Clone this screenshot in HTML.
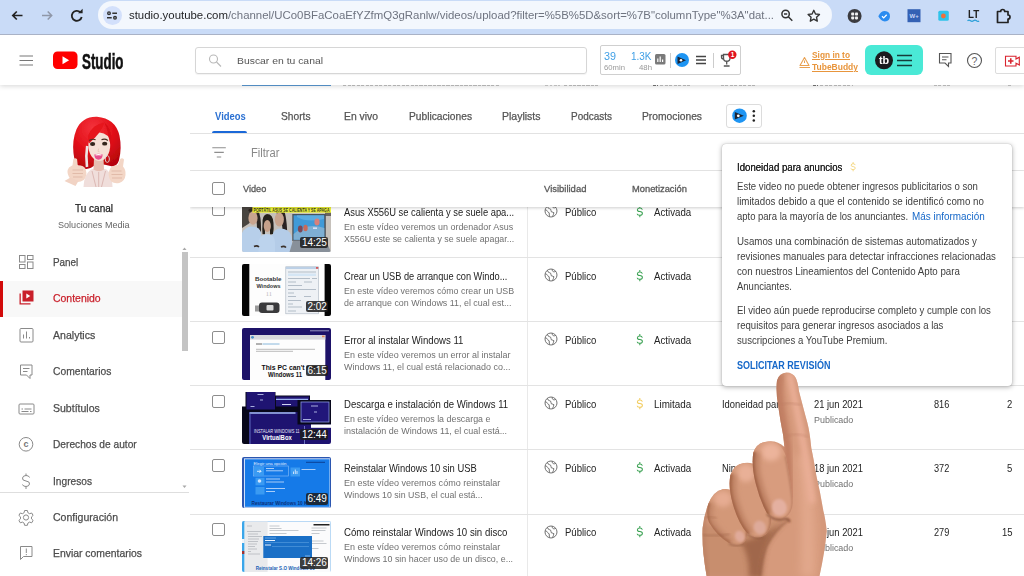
<!DOCTYPE html>
<html lang="es"><head><meta charset="utf-8"><title>Contenido del canal - YouTube Studio</title>
<style>
*{box-sizing:border-box;margin:0;padding:0}
html,body{width:1024px;height:576px;overflow:hidden;background:#fff}
body{position:relative;font-family:"Liberation Sans",sans-serif;color:#222;font-size:11px}
.t{position:absolute;white-space:nowrap;line-height:1}
.b{position:absolute}
svg{position:absolute;overflow:visible}
#chrome{position:absolute;left:0;top:0;width:1024px;height:35px;background:#c9dbf7;border-bottom:1px solid #a9b2c6;z-index:6}
#pill{position:absolute;left:98px;top:1px;width:734px;height:28px;border-radius:14px;background:#f3f7fd}
#tune{position:absolute;left:103px;top:6px;width:19px;height:19px;border-radius:50%;background:#d3e0fb}
#hdr{position:absolute;left:0;top:35px;width:1024px;height:50px;background:#fff;box-shadow:0 1px 5px rgba(0,0,0,.17);z-index:5}
#search{position:absolute;left:195px;top:12px;width:392px;height:27px;border:1px solid #d6d6d6;border-radius:3px;box-shadow:0 1px 1px rgba(0,0,0,.05)}
#stats{position:absolute;left:600px;top:10px;width:141px;height:30px;border:1px solid #cfcfcf;border-radius:2px}
#tbbtn{position:absolute;left:865px;top:10px;width:58px;height:30px;border-radius:6px;background:#4ae9d6}
#create{position:absolute;left:995px;top:12px;width:40px;height:27px;border:1px solid #dcdcdc;border-radius:2px}
.cb{position:absolute;left:212px;width:13px;height:13px;border:1px solid #8d8d8d;border-radius:2px;background:#fff}
.row{position:absolute;left:190px;width:834px;height:1px;background:#e3e3e3}
.th{position:absolute;left:242px;width:89px;height:51.500px;border-radius:2px;overflow:hidden}
.du{position:absolute;right:2.600px;bottom:3.500px;height:11.600px;background:rgba(28,28,28,.85);border-radius:2px;color:#fff;font-size:10px;line-height:11.600px;padding:0 1.500px;letter-spacing:0}
#pop{position:absolute;left:722px;top:144px;width:290px;height:241.500px;background:#fff;border-radius:4px;box-shadow:0 1px 5px rgba(0,0,0,.34),0 0 1px rgba(0,0,0,.3);z-index:3}
#thead{position:absolute;left:190px;top:170.500px;width:834px;height:36px;background:#fff;box-shadow:0 1px 3px rgba(0,0,0,.2);clip-path:inset(0 0 -8px 0);z-index:2}
</style></head><body>

<div id="chrome"><div id="pill"></div><div id="tune"></div>
<svg width="1024" height="35" viewBox="0 0 1024 35" style="left:0;top:0">
<path d="M22.500 15.500H13M16.800 11.500l-4 4 4 4" fill="none" stroke="#222" stroke-width="1.700"/>
<path d="M42 15.500H51.500M47.700 11.500l4 4-4 4" fill="none" stroke="#8f97a8" stroke-width="1.500"/>
<path d="M80.300 12.200A5 5 0 1 0 81.700 17" fill="none" stroke="#222" stroke-width="1.800"/><path d="M78 13.300h4.600V8.700z" fill="#222"/>
<g stroke="#333" stroke-width="1.400" fill="none"><circle cx="109" cy="13.200" r="1.300"/><path d="M112.300 13.200h4.700M107 17.800h4.700"/><circle cx="115" cy="17.800" r="1.300"/></g>
<g stroke="#333" stroke-width="1.500" fill="none"><circle cx="785.600" cy="14" r="3.700"/><path d="M788.300 16.800l4 4M784 14h3.200"/></g>
<path d="M813.800 10.300l1.700 3.700 4 .4-3 2.800.8 4-3.500-2-3.500 2 .8-4-3-2.800 4-.4z" fill="none" stroke="#333" stroke-width="1.350" stroke-linejoin="round"/>
<circle cx="854.600" cy="16" r="7" fill="#3b3b3f"/><g fill="#f0f0f0"><rect x="851.200" y="12.600" width="3" height="3" rx=".8"/><rect x="855" y="12.600" width="3" height="3" rx=".8"/><rect x="851.200" y="16.400" width="3" height="3" rx=".8"/><rect x="855" y="16.400" width="3" height="3" rx=".8"/></g>
<path d="M878.300 16.200q2.500-5.200 6.500-5.200 5.200.2 5.200 5.200t-5.200 5.200q-4-.2-6.500-5.200z" fill="#2b8cf0"/><path d="M882 16.200l1.700 1.700 3-3.200" stroke="#fff" stroke-width="1.300" fill="none"/>
<rect x="907.500" y="9.200" width="13" height="13" fill="#3461b4"/>
<rect x="938.300" y="10.800" width="10.500" height="10" rx="1.500" fill="#2fc4ea"/><circle cx="943.400" cy="16" r="2.400" fill="#f0703a"/>
<path d="M967.500 20.800q1.500-1.300 3 0t3 0 3 0 2.500 0" stroke="#2a9fd8" stroke-width="1.200" fill="none"/>
<path d="M997.500 11.500h3.200a2 2 0 0 1 4 0h3.300v3.500a2 2 0 0 1 0 4v3.500h-10.500z" fill="none" stroke="#222" stroke-width="1.700" stroke-linejoin="round"/>
</svg>
<span class="t" style="left:128.5px;top:9px;font-size:11.6px;color:#6f7480;transform:scaleX(0.9840);transform-origin:0 50%;"><span style="color:#1f2023">studio.youtube.com</span>/channel/UCo0BFaCoaEfYZfmQ3gRanlw/videos/upload?filter=%5B%5D&amp;sort=%7B"columnType"%3A"dat...</span>
<span class="t" style="left:909.5px;top:13px;font-size:6.0px;color:#c9d8f8;font-weight:bold;">W+</span>
<span class="t" style="left:967.8px;top:10px;font-size:10.0px;color:#222;transform:scaleX(0.9752);transform-origin:0 50%;font-weight:bold;">LT</span>
</div>
<div id="hdr">
<svg width="1024" height="50" viewBox="0 35 1024 50" style="left:0;top:0">
<path d="M19.500 56h13.500M19.500 60.500h13.500M19.500 65h13.500" stroke="#777" stroke-width="1"/>
<rect x="53" y="51.500" width="24.500" height="17.500" rx="4.500" fill="#f00"/><path d="M62.500 56.300v8l6.600-4z" fill="#fff"/>
<g stroke="#b8b8b8" stroke-width="1.100" fill="none"><circle cx="213.500" cy="59" r="4"/><path d="M216.500 62l4.500 4.500"/></g>
<rect x="655" y="54" width="10.500" height="10.500" rx="1.500" fill="#7a7a7a"/><path d="M657.800 62v-3.500M660.200 62v-5.500M662.600 62v-2.500" stroke="#fff" stroke-width="1.200"/>
<path d="M670.500 53v15M713.500 53v15" stroke="#ccc" stroke-width="1"/>
<circle cx="682" cy="60" r="7" fill="#1e95f3"/><path d="M677.500 56.500v7.500l8.500-3.700z" fill="#1c2433"/><circle cx="681" cy="60.200" r="1.300" fill="#fff"/>
<path d="M696 56.500h10M696 60h10M696 63.500h10" stroke="#444" stroke-width="1.500"/>
<g fill="none" stroke="#555" stroke-width="1.300"><path d="M723.500 54.500h6.500v3.500a3.250 3.250 0 0 1-6.500 0zM723.500 55.500h-2v1.500a2 2 0 0 0 2 2M730 55.500h1.500M726.700 61.500v3M723.800 66h5.800"/></g>
<circle cx="732.300" cy="54.800" r="4.200" fill="#e0131f"/>
<path d="M804.500 57.500l4.500 8h-9zM799.500 67.500h10.500" fill="none" stroke="#e9a050" stroke-width="1.100" stroke-linejoin="round"/><path d="M804.500 60.500v2.500" stroke="#e9a050" stroke-width="1"/>
<path d="M939.500 53.500h11.500v9.500h-2.500v3.500l-3.500-3.500h-5.500z" fill="none" stroke="#555" stroke-width="1.100"/><path d="M942 57h6.500M942 59.800h4.500" stroke="#555" stroke-width="1.100"/>
<circle cx="974.500" cy="60.500" r="7" fill="none" stroke="#555" stroke-width="1.100"/>
<path d="M1005.500 56.200h10.500v2.800l3.300-1.800v7.800l-3.300-1.800v2.800h-10.500z" fill="none" stroke="#d9232e" stroke-width="1.100"/><path d="M1008 61h5.500M1010.750 58.300v5.400" stroke="#d9232e" stroke-width="1.600"/>
</svg>
<span class="t" style="left:82.3px;top:16px;font-size:22.0px;color:#111;transform:scaleX(0.6064);transform-origin:0 50%;font-weight:bold;-webkit-text-stroke:.55px #111;">Studio</span>
<div id="search"></div>
<span class="t" style="left:237.0px;top:21px;font-size:9.6px;color:#555;transform:scaleX(1.0822);transform-origin:0 50%;">Buscar en tu canal</span>
<div id="stats"></div>
<span class="t" style="left:604.0px;top:16px;font-size:11.5px;color:#3f9fe6;transform:scaleX(0.9377);transform-origin:0 50%;">39</span>
<span class="t" style="left:604.0px;top:29px;font-size:7.6px;color:#999;transform:scaleX(1.0151);transform-origin:0 50%;">60min</span>
<span class="t" style="left:631.0px;top:16px;font-size:11.5px;color:#3f9fe6;transform:scaleX(0.8660);transform-origin:0 50%;">1.3K</span>
<span class="t" style="left:638.5px;top:29px;font-size:7.6px;color:#999;transform:scaleX(1.0259);transform-origin:0 50%;">48h</span>
<span class="t" style="left:730.8px;top:17px;font-size:6.5px;color:#fff;font-weight:bold;">1</span>
<span class="t" style="left:812.0px;top:15px;font-size:9.6px;color:#e8953c;transform:scaleX(0.8695);transform-origin:0 50%;font-weight:bold;text-decoration:underline;">Sign in to</span>
<span class="t" style="left:812.0px;top:27px;font-size:9.6px;color:#e8953c;transform:scaleX(0.8836);transform-origin:0 50%;font-weight:bold;text-decoration:underline;">TubeBuddy</span>
<div id="tbbtn"></div>
<svg width="60" height="30" viewBox="865 45 60 30" style="left:865px;top:10px"><circle cx="884" cy="60.300" r="9" fill="#1b1b1f"/><path d="M897 55.500h15M897 60.500h15M897 65.500h15" stroke="#163c3a" stroke-width="1.700"/></svg>
<span class="t" style="left:878.8px;top:20px;font-size:10.5px;color:#fff;transform:scaleX(1.0280);transform-origin:0 50%;font-weight:bold;">tb</span>
<span class="t" style="left:971.6px;top:21px;font-size:10.5px;color:#666;">?</span>
<div id="create"></div>
</div>
<div class="b" style="left:242px;top:84.500px;width:89px;height:1.500px;background:#5b9bd5;z-index:4"></div>
<div class="b" style="left:343px;top:85px;width:157px;height:1px;background:repeating-linear-gradient(90deg,#c4c4c4 0 3px,transparent 3px 4.500px);z-index:4"></div>
<div class="b" style="left:545px;top:85px;width:15px;height:1px;background:repeating-linear-gradient(90deg,#d0d0d0 0 3px,transparent 3px 4.500px);z-index:4"></div>
<div class="b" style="left:564px;top:85px;width:34px;height:1px;background:repeating-linear-gradient(90deg,#c4c4c4 0 3px,transparent 3px 4.500px);z-index:4"></div>
<div class="b" style="left:653px;top:85px;width:5px;height:1px;background:repeating-linear-gradient(90deg,#777 0 3px,transparent 3px 4.500px);z-index:4"></div>
<div class="b" style="left:660px;top:85px;width:30px;height:1px;background:repeating-linear-gradient(90deg,#c4c4c4 0 3px,transparent 3px 4.500px);z-index:4"></div>
<div class="b" style="left:721px;top:85px;width:36px;height:1px;background:repeating-linear-gradient(90deg,#c4c4c4 0 3px,transparent 3px 4.500px);z-index:4"></div>
<div class="b" style="left:813px;top:85px;width:5px;height:1px;background:repeating-linear-gradient(90deg,#777 0 3px,transparent 3px 4.500px);z-index:4"></div>
<div class="b" style="left:820px;top:85px;width:33px;height:1px;background:repeating-linear-gradient(90deg,#c4c4c4 0 3px,transparent 3px 4.500px);z-index:4"></div>
<div class="b" style="left:934px;top:85px;width:16px;height:1px;background:repeating-linear-gradient(90deg,#c8c8c8 0 3px,transparent 3px 4.500px);z-index:4"></div>
<div class="b" style="left:1008px;top:85px;width:3px;height:1px;background:repeating-linear-gradient(90deg,#c8c8c8 0 3px,transparent 3px 4.500px);z-index:4"></div>
<div class="b" style="left:0;top:280.500px;width:182px;height:36px;background:#f8f8f8"></div>
<div class="b" style="left:0;top:280.500px;width:3px;height:36px;background:#d20a0a"></div>
<div class="b" style="left:182px;top:252px;width:5.500px;height:98.500px;background:#c4c4c4"></div>
<div class="b" style="left:0;top:492px;width:189px;height:1px;background:#dedede"></div>
<span class="t" style="left:75.0px;top:203px;font-size:11.0px;color:#222;transform:scaleX(0.9092);transform-origin:0 50%;-webkit-text-stroke:.25px;">Tu canal</span>
<span class="t" style="left:58.0px;top:220px;font-size:9.6px;color:#666;transform:scaleX(0.9454);transform-origin:0 50%;">Soluciones Media</span>
<span class="t" style="left:53.0px;top:257px;font-size:11.0px;color:#4c4c4c;transform:scaleX(0.8991);transform-origin:0 50%;-webkit-text-stroke:.25px;">Panel</span>
<span class="t" style="left:53.0px;top:293px;font-size:11.0px;color:#c9202b;transform:scaleX(0.9510);transform-origin:0 50%;-webkit-text-stroke:.25px;">Contenido</span>
<span class="t" style="left:53.0px;top:330px;font-size:11.0px;color:#4c4c4c;transform:scaleX(0.9607);transform-origin:0 50%;-webkit-text-stroke:.25px;">Analytics</span>
<span class="t" style="left:53.0px;top:366px;font-size:11.0px;color:#4c4c4c;transform:scaleX(0.9349);transform-origin:0 50%;-webkit-text-stroke:.25px;">Comentarios</span>
<span class="t" style="left:53.0px;top:403px;font-size:11.0px;color:#4c4c4c;transform:scaleX(0.9566);transform-origin:0 50%;-webkit-text-stroke:.25px;">Subtítulos</span>
<span class="t" style="left:53.0px;top:439px;font-size:11.0px;color:#4c4c4c;transform:scaleX(0.9249);transform-origin:0 50%;-webkit-text-stroke:.25px;">Derechos de autor</span>
<span class="t" style="left:53.0px;top:476px;font-size:11.0px;color:#4c4c4c;transform:scaleX(0.9241);transform-origin:0 50%;-webkit-text-stroke:.25px;">Ingresos</span>
<span class="t" style="left:53.0px;top:512px;font-size:11.0px;color:#4c4c4c;transform:scaleX(0.9576);transform-origin:0 50%;-webkit-text-stroke:.25px;">Configuración</span>
<span class="t" style="left:53.0px;top:548px;font-size:11.0px;color:#4c4c4c;transform:scaleX(0.9452);transform-origin:0 50%;-webkit-text-stroke:.25px;">Enviar comentarios</span>
<svg width="190" height="576" viewBox="0 0 190 576" style="left:0;top:0">
<g fill="none" stroke="#8a8a8a" stroke-width="1">
<rect x="19.500" y="255.500" width="5.500" height="6.500"/><rect x="27.500" y="255.500" width="5.500" height="4"/><rect x="19.500" y="264.500" width="5.500" height="4"/><rect x="27.500" y="262" width="5.500" height="6.500"/>
<rect x="20" y="328.500" width="13" height="13.500" rx="1"/><path d="M23.500 338.500v-4M26.500 338.500v-7M29.500 338.500v-1.500"/>
<path d="M20.500 365h11.500v10h-2v3.500l-3.500-3.500h-6z"/><path d="M23 368.500h6.500M23 371.500h4.500"/>
<rect x="19" y="404" width="15" height="10" rx="1"/><path d="M21.500 409h1.500M24.500 409h7M21.500 411.500h7M30 411.500h1.500"/>
<circle cx="26" cy="444.300" r="6.800"/>
<path d="M29.500 477.500q-.5-2-3.500-2t-3.500 2.500 3.500 3 3.500 3-3.500 2.500-3.500-2M26 473.500v2M26 486.500v2.500"/>
<circle cx="26" cy="517.500" r="2.600"/><path d="M24.600 510.500h2.800l.5 2.200 1.700 1 2.100-.7 1.400 2.400-1.600 1.500v2l1.600 1.500-1.400 2.400-2.100-.7-1.700 1-.5 2.200h-2.800l-.5-2.200-1.700-1-2.100.7-1.400-2.400 1.600-1.500v-2l-1.600-1.500 1.400-2.400 2.100.7 1.700-1z"/>
<path d="M20.500 546.500h11.500v10h-8.500l-3 3z"/><path d="M26.300 548.500v4.500M26.300 554v1.200"/>
</g>
<g fill="#c9202b"><path d="M22.500 290.500h11v11h-11z"/><path d="M19.500 293.500h1.300v9.700h9.700v1.300h-11z"/></g><path d="M26.300 293.500v5l4-2.500z" fill="#fff"/>
<path d="M182.500 250l2-2.500 2 2.500z" fill="#a8a8a8"/><path d="M182.500 485.500l2 2.500 2-2.500z" fill="#a8a8a8"/>
</svg>
<span class="t" style="left:23.6px;top:440px;font-size:9.0px;color:#777;font-weight:bold;">c</span>
<svg width="80" height="80" viewBox="56 110 80 80" style="left:56px;top:110px">
<defs><filter id="ab" x="-20%" y="-20%" width="140%" height="140%"><feGaussianBlur stdDeviation=".6"/></filter>
<radialGradient id="hg" cx=".42" cy=".22" r=".8"><stop offset="0" stop-color="#f4333c"/><stop offset=".55" stop-color="#e20f18"/><stop offset="1" stop-color="#b5050d"/></radialGradient></defs>
<g filter="url(#ab)">
<!-- torso -->
<path d="M83.500 187q.5-13 7.500-17.500l7.500-2 8 2q6 4.500 6 17.500z" fill="#f0dedb"/>
<path d="M92 171l4 16M105.500 171l-4 16M98.700 172v15" stroke="#dcb8b4" stroke-width="1" fill="none"/>
<!-- hair -->
<path d="M97 116.800q-14.500-.5-20.500 12.500-4.500 11-3 24 1 11 6.500 14 6 3 11 .5l6-4 8 1 6.500 1.500q5.500.5 7.500-6 3-12 .5-24.500-4-17.500-22.500-19z" fill="url(#hg)"/>
<!-- neck -->
<path d="M94 158h9.500l.5 11.500q-5 3.500-10.500 0z" fill="#e6bfb2"/>
<!-- face -->
<path d="M88.400 144q.5-11 11-11.500 10 .5 10.800 11 .4 8-3.400 13-3.500 4.500-7.500 4.500t-7.600-4.500q-3.600-5-3.300-12.500z" fill="#f5e0d6"/>
<!-- white streak -->
<path d="M87.200 146q-1.600 10-.2 21" stroke="#ece6e6" stroke-width="2.600" fill="none"/>
<!-- fringe sweep -->
<path d="M104.500 122.500q-3 10-15.500 21-1.500-3-.8-8 4-11 16.300-13z" fill="#e6151d"/>
<path d="M104.500 122.500q3.500 8 6 22.500 1.200-3 .8-8-1-10-6.800-14.500z" fill="#d80d15"/>
<!-- eyes brows -->
<ellipse cx="92.600" cy="144" rx="2.600" ry="1.900" fill="#33251f"/><ellipse cx="104.700" cy="143.700" rx="2.600" ry="1.900" fill="#33251f"/>
<path d="M89.300 140.600q3.200-2.200 6.300-.8M101.500 139.800q3.200-1.400 6.400.6" stroke="#4a2e22" stroke-width="1.200" fill="none"/>
<path d="M98.600 148.500l-.6 3 1.600.3" stroke="#e2bfb0" stroke-width=".7" fill="none"/>
<!-- mouth -->
<path d="M94.300 154.600q4.200-1.800 8.400 0-.4 5.200-4.200 5.200t-4.200-5.200z" fill="#e9508c"/><path d="M95.500 155q3-.8 6 0" stroke="#fff" stroke-width="1.100" fill="none"/>
<!-- earring -->
<ellipse cx="107.300" cy="159" rx="2.100" ry="3.400" fill="none" stroke="#ddd8d8" stroke-width=".9"/>
<!-- left fist -->
<path d="M69 177q-3-5.500 0-9.500l3.500-2.200.8-6q2-2.200 3.800 0l.6 6q6.500 0 8 4.200 2 6.500-2 10.500-4.200 3-9.500 1.500-3.500-1-5.200-4.500z" fill="#f3d6c6"/>
<path d="M72.500 170h10.500M72.500 173.500h10.500M73 177h9.500" stroke="#dcb4a2" stroke-width=".8" fill="none"/>
<path d="M64.500 181l6-3.500 8 3.500-3 5z" fill="#f1d3c4"/>
<!-- right fist -->
<path d="M109.500 178.500q-2-6 1-10.500 3-3 7.500-3l2.200-6q2-1.600 3.800.5l-1 7q3 3 2.500 8.500-.5 6-6.200 8-5 1-8-1.500-1.300-1.300-1.800-3z" fill="#f3d6c6"/>
<path d="M111.500 171h10M111.500 174.500h11M112 178h10" stroke="#dcb4a2" stroke-width=".8" fill="none"/>
</g></svg>
<span class="t" style="left:215.2px;top:111px;font-size:10.6px;color:#2a70d2;transform:scaleX(0.8915);transform-origin:0 50%;font-weight:bold;">Videos</span>
<span class="t" style="left:280.9px;top:111px;font-size:10.6px;color:#555;transform:scaleX(0.9633);transform-origin:0 50%;-webkit-text-stroke:.25px;">Shorts</span>
<span class="t" style="left:344.0px;top:111px;font-size:10.6px;color:#555;transform:scaleX(0.9784);transform-origin:0 50%;-webkit-text-stroke:.25px;">En vivo</span>
<span class="t" style="left:409.0px;top:111px;font-size:10.6px;color:#555;transform:scaleX(0.9637);transform-origin:0 50%;-webkit-text-stroke:.25px;">Publicaciones</span>
<span class="t" style="left:502.0px;top:111px;font-size:10.6px;color:#555;transform:scaleX(0.9908);transform-origin:0 50%;-webkit-text-stroke:.25px;">Playlists</span>
<span class="t" style="left:570.5px;top:111px;font-size:10.6px;color:#555;transform:scaleX(0.9408);transform-origin:0 50%;-webkit-text-stroke:.25px;">Podcasts</span>
<span class="t" style="left:641.5px;top:111px;font-size:10.6px;color:#555;transform:scaleX(0.9704);transform-origin:0 50%;-webkit-text-stroke:.25px;">Promociones</span>
<div class="b" style="left:212px;top:131px;width:35px;height:2.300px;background:#1a68d8;border-radius:2px 2px 0 0"></div>
<div class="b" style="left:190px;top:133px;width:834px;height:1px;background:#e2e2e2"></div>
<div class="b" style="left:725.500px;top:104px;width:36px;height:23.500px;border:1px solid #dcdcdc;border-radius:3px"></div>
<svg width="40" height="24" viewBox="725 104 40 24" style="left:725px;top:104px"><circle cx="739.500" cy="115.700" r="7.300" fill="#1e95f3"/><path d="M734.800 112v7.600l9-3.800z" fill="#1c2433"/><circle cx="738.300" cy="115.800" r="1.400" fill="#fff"/><circle cx="753.800" cy="111.200" r="1.250" fill="#222"/><circle cx="753.800" cy="115.800" r="1.250" fill="#222"/><circle cx="753.800" cy="120.400" r="1.250" fill="#222"/></svg>
<svg width="20" height="14" viewBox="210 145 20 14" style="left:210px;top:145px"><path d="M212.300 147.700h13.500M214.300 152.400h9.500M216.800 157h4.400" stroke="#8e8e8e" stroke-width="1.100"/></svg>
<span class="t" style="left:251.3px;top:147px;font-size:12.0px;color:#888;transform:scaleX(0.9292);transform-origin:0 50%;">Filtrar</span>
<div class="b" style="left:190px;top:170px;width:834px;height:1.500px;background:#e6e6e6"></div>
<div class="b" style="left:527px;top:206px;width:1px;height:370px;background:#e9e9e9"></div>
<div class="row" style="top:257.1px"></div>
<div class="cb" style="top:202.9px"></div>
<div class="th" style="top:200.1px"><svg width="89" height="52" viewBox="0 0 89 52" style="left:0;top:0"><defs><filter id="tb" x="-20%" y="-20%" width="140%" height="140%"><feGaussianBlur stdDeviation=".7"/></filter></defs>
<rect width="89" height="52" fill="#c6c1bb"/>
<g filter="url(#tb)">
<path d="M0 0h11v20q-4 4-11 8z" fill="#4a443f"/>
<rect x="83" y="6" width="6" height="10" fill="#6a655f"/>
<!-- person 1 -->
<path d="M6 10q5-4 10 0 3.500 6 3 24l-4 1q.5-10-1-16z" fill="#2c2521"/>
<ellipse cx="11" cy="18" rx="4.600" ry="6.800" fill="#c9a58f"/>
<path d="M0 33q3-6 9-6.500l5 .5q5 2 5.500 8l.5 17H0z" fill="#b7cfea"/>
<!-- person 3 -->
<path d="M33 11q5-4 9-.5 3.500 8 3.500 36l-4.500 2q.5-22-2.500-30z" fill="#2a2320"/>
<ellipse cx="37.300" cy="19.500" rx="4.600" ry="7" fill="#c8a48e"/>
<path d="M30 35q2-6 8-6.500l4 .5q7 2 8 9v14H30z" fill="#b4cce8"/>
<!-- person 2 -->
<path d="M20.500 24q-.5-9 4.500-10 6 0 6.500 9 .5 6-.5 11l-3 .5v-8l-5-1v9l-2.500-.5q-.5-5 0-10z" fill="#28211e"/>
<ellipse cx="25.300" cy="26" rx="3.600" ry="6" fill="#c6a08a"/>
<path d="M16.500 42q1-7 7-8l4 .3q5 1 5.500 8v10H16.500z" fill="#bcd3ed"/>
<path d="M12 46.500q3-1.500 5 .5M39 47q3-1.500 5 .5" stroke="#3a302b" stroke-width="1.600" fill="none"/>
<!-- laptop -->
<rect x="50.300" y="14" width="33.500" height="27" fill="#4c535b"/>
<rect x="51.600" y="15.300" width="30.700" height="24.500" fill="#3f9ad8"/>
<path d="M51.600 34q14-12 30.700-6v11.800H51.600z" fill="#8fb4d2" opacity=".8"/>
<path d="M55 17q10 6 27 2v-3.700H55z" fill="#6ab4e6" opacity=".7"/>
<ellipse cx="58.300" cy="29" rx="2.400" ry="3.400" fill="#7a4a5a"/><ellipse cx="63.500" cy="28" rx="2.200" ry="3.200" fill="#c86a5a"/><ellipse cx="75" cy="22" rx="2.600" ry="3.400" fill="#d8807a"/>
<rect x="71" y="27.500" width="4" height="1.300" fill="#eef"/>
<path d="M47.500 52l3.500-11.500h33l5 11.500z" fill="#88909a"/>
</g>
<rect x="10.400" y="6.500" width="78.600" height="6.200" fill="#f0f43c"/>
<text x="11.500" y="12" font-family="Liberation Sans,sans-serif" font-weight="bold" font-size="6.200" fill="#35351c" textLength="76" lengthAdjust="spacingAndGlyphs">PORTÁTIL ASUS SE CALIENTA Y SE APAGA</text>
</svg><span class="du">14:25</span></div>
<span class="t" style="left:343.6px;top:207px;font-size:10.5px;color:#222;transform:scaleX(0.8912);transform-origin:0 50%;">Asus X556U se calienta y se suele apa...</span>
<span class="t" style="left:343.6px;top:223px;font-size:9.0px;color:#707070;transform:scaleX(0.9941);transform-origin:0 50%;">En este vídeo veremos un ordenador Asus</span>
<span class="t" style="left:343.6px;top:235px;font-size:9.0px;color:#707070;transform:scaleX(0.9826);transform-origin:0 50%;">X556U este se calienta y se suele apagar...</span>
<svg width="14" height="14" viewBox="-7 -7 14 14" style="left:544.100px;top:204.0px"><g fill="none" stroke="#6a6a6a" stroke-width=".95"><circle r="6"/><path d="M-3.600-4.800q.3 2.200 2 2.400t1.600 2 1.800 1.600.6 2.400-.4 2.200M-5.800-1.200q1.800.2 2.400 1.600t1.600 1.400l.2 3.800M1.200-5.800q-.4 1.800 1 2.400t2.800-.4"/></g></svg>
<span class="t" style="left:564.7px;top:208px;font-size:10.2px;color:#242424;transform:scaleX(0.9365);transform-origin:0 50%;">Público</span>
<svg width="7.800" height="11.300" viewBox="0 0 9 13.600" style="left:636.400px;top:205.5px"><path d="M7.400 4.500q-.4-2-3-2t-2.900 2 2.900 2.200 3.100 2.300-3.100 2.200-3.200-1.900M4.400 0v2.600M4.400 11v2.600" fill="none" stroke="#3aa152" stroke-width="1.250"/></svg>
<span class="t" style="left:653.6px;top:208px;font-size:10.2px;color:#242424;transform:scaleX(0.9519);transform-origin:0 50%;">Activada</span>
<div class="row" style="top:321.2px"></div>
<div class="cb" style="top:267.0px"></div>
<div class="th" style="top:264.2px"><svg width="89" height="52" viewBox="0 0 89 52" style="left:0;top:0">
<rect width="89" height="52" fill="#fdfdfd"/><rect width="7.300" height="52" fill="#050505"/><rect x="82.600" width="6.400" height="52" fill="#050505"/>
<text x="13" y="17" font-family="Liberation Sans,sans-serif" font-weight="bold" font-size="6.200" fill="#333" textLength="26.500" lengthAdjust="spacingAndGlyphs">Bootable</text>
<text x="14.500" y="24" font-family="Liberation Sans,sans-serif" font-weight="bold" font-size="6.200" fill="#333" textLength="24" lengthAdjust="spacingAndGlyphs">Windows</text>
<text x="23.700" y="32" font-family="Liberation Serif,serif" font-size="6.500" fill="#bbb">11</text>
<rect x="13" y="41.500" width="5" height="6" fill="#9a9a9a"/><rect x="17" y="38.500" width="20.500" height="10.500" rx="3" fill="#3a3a3c"/><rect x="24.500" y="41" width="7" height="5.500" rx="1" fill="#d8d8d8"/>
<rect x="43.800" y="2.800" width="32.700" height="47" fill="#eef1f5" stroke="#aab4c0" stroke-width=".6"/><rect x="43.800" y="2.800" width="32.700" height="2.200" fill="#bcd0e6"/><rect x="74" y="3" width="2.300" height="1.800" fill="#d65a5a"/>
<g stroke="#9aa6b4" stroke-width=".7"><path d="M46 8h28M46 11h10M46 14.500h22M70 14.500h5M46 18h8M62 18h8M46 21.500h14M46 25.500h28M46 29h6M46 32.500h8M62 32.500h7M46 36.500h13M46 40h5M46 43h14M46 47h8"/></g>
<rect x="46" y="9.500" width="28" height="2.500" fill="#d5e6f5"/>
</svg><span class="du">2:02</span></div>
<span class="t" style="left:343.6px;top:271px;font-size:10.5px;color:#222;transform:scaleX(0.8776);transform-origin:0 50%;">Crear un USB de arranque con Windo...</span>
<span class="t" style="left:343.6px;top:287px;font-size:9.0px;color:#707070;transform:scaleX(0.9827);transform-origin:0 50%;">En este vídeo veremos cómo crear un USB</span>
<span class="t" style="left:343.6px;top:299px;font-size:9.0px;color:#707070;transform:scaleX(0.9880);transform-origin:0 50%;">de arranque con Windows 11, el cual est...</span>
<svg width="14" height="14" viewBox="-7 -7 14 14" style="left:544.100px;top:268.1px"><g fill="none" stroke="#6a6a6a" stroke-width=".95"><circle r="6"/><path d="M-3.600-4.800q.3 2.200 2 2.400t1.600 2 1.800 1.600.6 2.400-.4 2.200M-5.800-1.200q1.800.2 2.400 1.600t1.600 1.400l.2 3.800M1.200-5.800q-.4 1.800 1 2.400t2.800-.4"/></g></svg>
<span class="t" style="left:564.7px;top:272px;font-size:10.2px;color:#242424;transform:scaleX(0.9365);transform-origin:0 50%;">Público</span>
<svg width="7.800" height="11.300" viewBox="0 0 9 13.600" style="left:636.400px;top:269.6px"><path d="M7.400 4.500q-.4-2-3-2t-2.900 2 2.900 2.200 3.100 2.300-3.100 2.200-3.200-1.900M4.400 0v2.600M4.400 11v2.600" fill="none" stroke="#3aa152" stroke-width="1.250"/></svg>
<span class="t" style="left:653.6px;top:272px;font-size:10.2px;color:#242424;transform:scaleX(0.9519);transform-origin:0 50%;">Activada</span>
<div class="row" style="top:385.3px"></div>
<div class="cb" style="top:331.1px"></div>
<div class="th" style="top:328.3px"><svg width="89" height="52" viewBox="0 0 89 52" style="left:0;top:0">
<rect width="89" height="52" fill="#1d1268"/>
<rect x="8" y="7" width="75.300" height="45" fill="#fdfdfd"/><rect x="8" y="7" width="75.300" height="4.600" fill="#d8d8dc"/>
<circle cx="10.500" cy="9.300" r="1.400" fill="#4a90c8"/><rect x="80" y="7.600" width="2.600" height="1.600" fill="#e08a5a"/>
<path d="M68 2.800h19" stroke="#b8b8d8" stroke-width=".8"/>
<path d="M14 16h6" stroke="#555" stroke-width=".9"/><path d="M20.500 16h17" stroke="#7ab0d8" stroke-width=".9"/>
<path d="M14 21.300h59M14 23.300h37" stroke="#aaa" stroke-width=".8"/>
<text x="19.500" y="42" font-family="Liberation Sans,sans-serif" font-weight="bold" font-size="6.300" fill="#111" textLength="56" lengthAdjust="spacingAndGlyphs">This PC can't run</text>
<text x="26" y="48.800" font-family="Liberation Sans,sans-serif" font-weight="bold" font-size="6.300" fill="#111" textLength="34" lengthAdjust="spacingAndGlyphs">Windows 11</text>
</svg><span class="du">6:15</span></div>
<span class="t" style="left:343.6px;top:335px;font-size:10.5px;color:#222;transform:scaleX(0.9147);transform-origin:0 50%;">Error al instalar Windows 11</span>
<span class="t" style="left:343.6px;top:351px;font-size:9.0px;color:#707070;transform:scaleX(0.9958);transform-origin:0 50%;">En este vídeo veremos un error al instalar</span>
<span class="t" style="left:343.6px;top:363px;font-size:9.0px;color:#707070;transform:scaleX(0.9938);transform-origin:0 50%;">Windows 11, el cual está relacionado co...</span>
<svg width="14" height="14" viewBox="-7 -7 14 14" style="left:544.100px;top:332.2px"><g fill="none" stroke="#6a6a6a" stroke-width=".95"><circle r="6"/><path d="M-3.600-4.800q.3 2.200 2 2.400t1.600 2 1.800 1.600.6 2.400-.4 2.200M-5.800-1.200q1.800.2 2.400 1.600t1.600 1.400l.2 3.800M1.200-5.800q-.4 1.800 1 2.400t2.800-.4"/></g></svg>
<span class="t" style="left:564.7px;top:336px;font-size:10.2px;color:#242424;transform:scaleX(0.9365);transform-origin:0 50%;">Público</span>
<svg width="7.800" height="11.300" viewBox="0 0 9 13.600" style="left:636.400px;top:333.7px"><path d="M7.400 4.500q-.4-2-3-2t-2.900 2 2.900 2.200 3.100 2.300-3.100 2.200-3.200-1.900M4.400 0v2.600M4.400 11v2.600" fill="none" stroke="#3aa152" stroke-width="1.250"/></svg>
<span class="t" style="left:653.6px;top:336px;font-size:10.2px;color:#242424;transform:scaleX(0.9519);transform-origin:0 50%;">Activada</span>
<div class="row" style="top:449.4px"></div>
<div class="cb" style="top:395.2px"></div>
<div class="th" style="top:392.4px"><svg width="89" height="53" viewBox="0 0 89 53" style="left:0;top:0">
<rect width="89" height="53" fill="#fff"/>
<rect x="33" y="3.500" width="35" height="17" fill="#0a0a1a"/><rect x="34" y="4.500" width="33" height="15" fill="#1f1472"/><path d="M34 7.300h32" stroke="#9db4ee" stroke-width="1.200"/><path d="M40 12.500h9" stroke="#cfd4f0" stroke-width="1.200"/>
<rect x="0" y="14.500" width="69" height="38.500" fill="#07071a"/>
<rect x="7" y="20" width="82" height="33" fill="#1e1370"/><path d="M7.500 21h46" stroke="#a4bdf2" stroke-width="1.500"/><path d="M8 21v32" stroke="#6d7fd0" stroke-width=".8"/>
<rect x="3.500" y="0" width="30" height="18.500" fill="#07071a"/><rect x="4.500" y="0" width="28.500" height="17.500" fill="#1f1472"/><path d="M15.500 2.500h6M18 8h3M8.500 14.500h4" stroke="#b8c0ea" stroke-width=".9"/>
<rect x="55.500" y="8" width="33.500" height="24.500" fill="#07071a"/><rect x="59" y="10" width="28" height="20" fill="#21167a" stroke="#8a98e0" stroke-width=".8"/><path d="M69 14h7M72 20h3M61 27.500h8" stroke="#b8c0ea" stroke-width=".9"/>
<rect x="69" y="32.500" width="20" height="3.300" fill="#fff"/><path d="M62.500 34v19" stroke="#8a98e0" stroke-width=".7"/>
<text x="12" y="41" font-family="Liberation Sans,sans-serif" font-size="5" fill="#e8e8f8" textLength="45.500" lengthAdjust="spacingAndGlyphs">INSTALAR WINDOWS 11</text>
<text x="20.300" y="48.300" font-family="Liberation Sans,sans-serif" font-weight="bold" font-size="6.500" fill="#fff" textLength="29.500" lengthAdjust="spacingAndGlyphs">VirtualBox</text>
</svg><span class="du">12:44</span></div>
<span class="t" style="left:343.6px;top:399px;font-size:10.5px;color:#222;transform:scaleX(0.9109);transform-origin:0 50%;">Descarga e instalación de Windows 11</span>
<span class="t" style="left:343.6px;top:415px;font-size:9.0px;color:#707070;transform:scaleX(0.9852);transform-origin:0 50%;">En este vídeo veremos la descarga e</span>
<span class="t" style="left:343.6px;top:427px;font-size:9.0px;color:#707070;transform:scaleX(0.9950);transform-origin:0 50%;">instalación de Windows 11, el cual está...</span>
<svg width="14" height="14" viewBox="-7 -7 14 14" style="left:544.100px;top:396.3px"><g fill="none" stroke="#6a6a6a" stroke-width=".95"><circle r="6"/><path d="M-3.600-4.800q.3 2.200 2 2.400t1.600 2 1.800 1.600.6 2.400-.4 2.200M-5.800-1.200q1.800.2 2.400 1.600t1.600 1.400l.2 3.800M1.200-5.800q-.4 1.800 1 2.400t2.800-.4"/></g></svg>
<span class="t" style="left:564.7px;top:400px;font-size:10.2px;color:#242424;transform:scaleX(0.9365);transform-origin:0 50%;">Público</span>
<svg width="7.800" height="11.300" viewBox="0 0 9 13.600" style="left:636.400px;top:397.8px"><path d="M7.400 4.500q-.4-2-3-2t-2.900 2 2.900 2.200 3.100 2.300-3.100 2.200-3.200-1.900M4.400 0v2.600M4.400 11v2.600" fill="none" stroke="#f2cc5e" stroke-width="1.250"/></svg>
<span class="t" style="left:653.6px;top:400px;font-size:10.2px;color:#242424;transform:scaleX(0.9658);transform-origin:0 50%;">Limitada</span>
<span class="t" style="left:721.9px;top:400px;font-size:10.2px;color:#242424;transform:scaleX(0.9219);transform-origin:0 50%;">Idoneidad para ...</span>
<span class="t" style="left:814.0px;top:400px;font-size:10.2px;color:#242424;transform:scaleX(0.9199);transform-origin:0 50%;">21 jun 2021</span>
<span class="t" style="left:814.0px;top:416px;font-size:9.0px;color:#707070;transform:scaleX(0.9942);transform-origin:0 50%;">Publicado</span>
<span class="t" style="left:934.0px;top:400px;font-size:10.2px;color:#242424;transform:scaleX(0.9000);transform-origin:0 50%;">816</span>
<span class="t" style="left:1006.9px;top:400px;font-size:10.2px;color:#242424;transform:scaleX(0.9302);transform-origin:0 50%;">2</span>
<div class="row" style="top:513.5px"></div>
<div class="cb" style="top:459.3px"></div>
<div class="th" style="top:456.5px"><svg width="89" height="52" viewBox="0 0 89 52" style="left:0;top:0">
<rect width="89" height="52" fill="#2b56b0"/><rect x="2" y="1.300" width="86" height="49.500" fill="#cfe0fb"/><rect x="3" y="2.300" width="84.500" height="47.500" fill="#157ae8"/>
<text x="11.500" y="7.500" font-family="Liberation Sans,sans-serif" font-size="4.200" fill="#e4efff" textLength="33" lengthAdjust="spacingAndGlyphs">Elegir una opción</text>
<path d="M64 5.300h19" stroke="#0a3a8a" stroke-width=".9"/>
<rect x="11.500" y="9" width="35" height="10" fill="none" stroke="#8cc0f8" stroke-width=".6"/>
<rect x="12" y="9.500" width="10" height="9.500" fill="#3a9af2"/><path d="M15 14.300h4l-1.500-1.500M19 14.300l-1.500 1.500" stroke="#fff" stroke-width=".8" fill="none"/>
<rect x="48.500" y="10.500" width="9.500" height="9" fill="#3a9af2"/><path d="M51.500 17v-2.500M53.300 17v-4.500M55 17v-3" stroke="#e8f2ff" stroke-width=".8"/>
<rect x="13.500" y="20.800" width="9" height="7.500" fill="#3a9af2"/><circle cx="17.500" cy="24" r="1.800" fill="#cfe4ff"/>
<rect x="13.500" y="30" width="9" height="7.500" fill="#3a9af2"/>
<path d="M24 11.500h8M24 13.800h17M59.500 12.500h14M24 22h14M24 25h18M24 31.500h19M24 34.500h9" stroke="#cfe2fb" stroke-width=".8"/>
<text x="9.500" y="47.500" font-family="Liberation Sans,sans-serif" font-weight="bold" font-size="5.500" fill="#0c2f78" textLength="56" lengthAdjust="spacingAndGlyphs">Restaurar Windows 10 K</text>
</svg><span class="du">6:49</span></div>
<span class="t" style="left:343.6px;top:463px;font-size:10.5px;color:#222;transform:scaleX(0.8959);transform-origin:0 50%;">Reinstalar Windows 10 sin USB</span>
<span class="t" style="left:343.6px;top:479px;font-size:9.0px;color:#707070;transform:scaleX(1.0008);transform-origin:0 50%;">En este vídeo veremos cómo reinstalar</span>
<span class="t" style="left:343.6px;top:491px;font-size:9.0px;color:#707070;transform:scaleX(0.9763);transform-origin:0 50%;">Windows 10 sin USB, el cual está...</span>
<svg width="14" height="14" viewBox="-7 -7 14 14" style="left:544.100px;top:460.4px"><g fill="none" stroke="#6a6a6a" stroke-width=".95"><circle r="6"/><path d="M-3.600-4.800q.3 2.200 2 2.400t1.600 2 1.800 1.600.6 2.400-.4 2.200M-5.800-1.200q1.800.2 2.400 1.600t1.600 1.400l.2 3.800M1.200-5.800q-.4 1.800 1 2.400t2.800-.4"/></g></svg>
<span class="t" style="left:564.7px;top:464px;font-size:10.2px;color:#242424;transform:scaleX(0.9365);transform-origin:0 50%;">Público</span>
<svg width="7.800" height="11.300" viewBox="0 0 9 13.600" style="left:636.400px;top:461.9px"><path d="M7.400 4.500q-.4-2-3-2t-2.900 2 2.900 2.200 3.100 2.300-3.100 2.200-3.200-1.900M4.400 0v2.600M4.400 11v2.600" fill="none" stroke="#3aa152" stroke-width="1.250"/></svg>
<span class="t" style="left:653.6px;top:464px;font-size:10.2px;color:#242424;transform:scaleX(0.9519);transform-origin:0 50%;">Activada</span>
<span class="t" style="left:721.9px;top:464px;font-size:10.2px;color:#242424;transform:scaleX(0.9215);transform-origin:0 50%;">Ninguna</span>
<span class="t" style="left:814.0px;top:464px;font-size:10.2px;color:#242424;transform:scaleX(0.9199);transform-origin:0 50%;">18 jun 2021</span>
<span class="t" style="left:814.0px;top:480px;font-size:9.0px;color:#707070;transform:scaleX(0.9942);transform-origin:0 50%;">Publicado</span>
<span class="t" style="left:934.0px;top:464px;font-size:10.2px;color:#242424;transform:scaleX(0.9000);transform-origin:0 50%;">372</span>
<span class="t" style="left:1006.9px;top:464px;font-size:10.2px;color:#242424;transform:scaleX(0.9302);transform-origin:0 50%;">5</span>
<div class="row" style="top:577.6px"></div>
<div class="cb" style="top:523.4px"></div>
<div class="th" style="top:520.6px"><svg width="89" height="52" viewBox="0 0 89 52" style="left:0;top:0">
<rect width="89" height="52" fill="#fbfbfc"/><rect width="89" height="52" fill="none" stroke="#7ab8ee" stroke-width="1"/><rect width="2.600" height="52" fill="#3aa6ea"/><rect x="0" y="18" width="2.600" height="4" fill="#f0f4f8"/><rect x="0" y="30" width="2.600" height="3" fill="#a03030"/>
<rect x="2.600" y=".5" width="23" height="51" fill="#e9eaec"/>
<g stroke="#b4b8be" stroke-width=".8"><path d="M5 5h5M5 10.500h14M6 13h10M6 15.500h14M6 18h11M6 20.500h10M6 23h9M6 25.500h7M6 28h9M6 30.500h3M6 33h12"/></g>
<g stroke="#b8bcc2" stroke-width=".8"><path d="M27.500 5h10M27.500 7.500h12M27.500 9.500h29M27.500 12.500h17"/><path d="M69.500 7h15M69.500 9.500h14M69.500 12.500h8M69.500 20h12M69.500 22.500h15M69.500 27.500h7"/></g>
<path d="M71.500 3.700h16" stroke="#222" stroke-width="1.500"/>
<rect x="21.300" y="15" width="48.700" height="22" fill="#1a6fc6"/><path d="M23 17h11" stroke="#7ab4ee" stroke-width=".8"/><path d="M23 19.500h10M23 24h6" stroke="#e8f2ff" stroke-width="1"/><path d="M23 21.500h44M30 25.500h37" stroke="#5a9fe0" stroke-width=".6"/><path d="M63 35h5" stroke="#9ac6f4" stroke-width=".8"/>
<text x="13.700" y="48.500" font-family="Liberation Sans,sans-serif" font-weight="bold" font-size="5.600" fill="#1a5fb4" textLength="59" lengthAdjust="spacingAndGlyphs">Reinstalar S.O Windows 10</text>
</svg><span class="du">14:26</span></div>
<span class="t" style="left:343.6px;top:527px;font-size:10.5px;color:#222;transform:scaleX(0.9180);transform-origin:0 50%;">Cómo reinstalar Windows 10 sin disco</span>
<span class="t" style="left:343.6px;top:543px;font-size:9.0px;color:#707070;transform:scaleX(1.0008);transform-origin:0 50%;">En este vídeo veremos cómo reinstalar</span>
<span class="t" style="left:343.6px;top:555px;font-size:9.0px;color:#707070;transform:scaleX(0.9883);transform-origin:0 50%;">Windows 10 sin hacer uso de un disco, e...</span>
<svg width="14" height="14" viewBox="-7 -7 14 14" style="left:544.100px;top:524.5px"><g fill="none" stroke="#6a6a6a" stroke-width=".95"><circle r="6"/><path d="M-3.600-4.800q.3 2.200 2 2.400t1.600 2 1.800 1.600.6 2.400-.4 2.200M-5.800-1.200q1.800.2 2.400 1.600t1.600 1.400l.2 3.800M1.200-5.800q-.4 1.800 1 2.400t2.800-.4"/></g></svg>
<span class="t" style="left:564.7px;top:528px;font-size:10.2px;color:#242424;transform:scaleX(0.9365);transform-origin:0 50%;">Público</span>
<svg width="7.800" height="11.300" viewBox="0 0 9 13.600" style="left:636.400px;top:526.0px"><path d="M7.400 4.500q-.4-2-3-2t-2.900 2 2.900 2.200 3.100 2.300-3.100 2.200-3.200-1.900M4.400 0v2.600M4.400 11v2.600" fill="none" stroke="#3aa152" stroke-width="1.250"/></svg>
<span class="t" style="left:653.6px;top:528px;font-size:10.2px;color:#242424;transform:scaleX(0.9519);transform-origin:0 50%;">Activada</span>
<span class="t" style="left:721.9px;top:528px;font-size:10.2px;color:#242424;transform:scaleX(0.9215);transform-origin:0 50%;">Ninguna</span>
<span class="t" style="left:814.0px;top:528px;font-size:10.2px;color:#242424;transform:scaleX(0.9199);transform-origin:0 50%;">16 jun 2021</span>
<span class="t" style="left:814.0px;top:544px;font-size:9.0px;color:#707070;transform:scaleX(0.9942);transform-origin:0 50%;">Publicado</span>
<span class="t" style="left:934.0px;top:528px;font-size:10.2px;color:#242424;transform:scaleX(0.9000);transform-origin:0 50%;">279</span>
<span class="t" style="left:1001.6px;top:528px;font-size:10.2px;color:#242424;transform:scaleX(0.9302);transform-origin:0 50%;">15</span>
<div id="thead"></div>
<div class="cb" style="top:182px;z-index:2"></div>
<span class="t" style="left:242.5px;top:184px;font-size:9.6px;color:#5a5a5a;transform:scaleX(0.9559);transform-origin:0 50%;z-index:2;-webkit-text-stroke:.3px;">Video</span>
<span class="t" style="left:543.6px;top:184px;font-size:9.6px;color:#5a5a5a;transform:scaleX(0.9853);transform-origin:0 50%;z-index:2;-webkit-text-stroke:.3px;">Visibilidad</span>
<span class="t" style="left:632.0px;top:184px;font-size:9.6px;color:#5a5a5a;transform:scaleX(0.9729);transform-origin:0 50%;z-index:2;-webkit-text-stroke:.3px;">Monetización</span>
<div id="pop"></div>
<span class="t" style="left:736.6px;top:163px;font-size:10.4px;color:#222;transform:scaleX(0.9261);transform-origin:0 50%;z-index:4;text-shadow:0 0 .3px #222;">Idoneidad para anuncios</span>
<svg width="6.400" height="9.300" viewBox="0 0 9 13.600" style="left:850.300px;top:162.100px;z-index:4"><path d="M7.400 4.500q-.4-2-3-2t-2.900 2 2.900 2.200 3.100 2.300-3.100 2.200-3.200-1.900M4.400 0v2.600M4.400 11v2.600" fill="none" stroke="#f3d272" stroke-width="1.200"/></svg>
<span class="t" style="left:736.6px;top:182px;font-size:10.4px;color:#3e3e3e;transform:scaleX(0.9227);transform-origin:0 50%;z-index:4;">Este video no puede obtener ingresos publicitarios o son</span>
<span class="t" style="left:736.6px;top:197px;font-size:10.4px;color:#3e3e3e;transform:scaleX(0.9373);transform-origin:0 50%;z-index:4;">limitados debido a que el contenido se identificó como no</span>
<span class="t" style="left:736.6px;top:212px;font-size:10.4px;color:#3e3e3e;transform:scaleX(0.9119);transform-origin:0 50%;z-index:4;">apto para la mayoría de los anunciantes.</span>
<span class="t" style="left:911.8px;top:212px;font-size:10.4px;color:#1668c9;transform:scaleX(0.9536);transform-origin:0 50%;z-index:4;">Más información</span>
<span class="t" style="left:736.6px;top:237px;font-size:10.4px;color:#3e3e3e;transform:scaleX(0.9355);transform-origin:0 50%;z-index:4;">Usamos una combinación de sistemas automatizados y</span>
<span class="t" style="left:736.6px;top:252px;font-size:10.4px;color:#3e3e3e;transform:scaleX(0.9280);transform-origin:0 50%;z-index:4;">revisiones manuales para detectar infracciones relacionadas</span>
<span class="t" style="left:736.6px;top:267px;font-size:10.4px;color:#3e3e3e;transform:scaleX(0.9343);transform-origin:0 50%;z-index:4;">con nuestros Lineamientos del Contenido Apto para</span>
<span class="t" style="left:736.6px;top:282px;font-size:10.4px;color:#3e3e3e;transform:scaleX(0.9138);transform-origin:0 50%;z-index:4;">Anunciantes.</span>
<span class="t" style="left:736.6px;top:306px;font-size:10.4px;color:#3e3e3e;transform:scaleX(0.9235);transform-origin:0 50%;z-index:4;">El video aún puede reproducirse completo y cumple con los</span>
<span class="t" style="left:736.6px;top:321px;font-size:10.4px;color:#3e3e3e;transform:scaleX(0.9234);transform-origin:0 50%;z-index:4;">requisitos para generar ingresos asociados a las</span>
<span class="t" style="left:736.6px;top:336px;font-size:10.4px;color:#3e3e3e;transform:scaleX(0.9256);transform-origin:0 50%;z-index:4;">suscripciones a YouTube Premium.</span>
<span class="t" style="left:736.6px;top:361px;font-size:10.4px;color:#1668c9;transform:scaleX(0.8667);transform-origin:0 50%;font-weight:bold;z-index:4;">SOLICITAR REVISIÓN</span>
<svg width="1024" height="576" viewBox="0 0 1024 576" style="left:0;top:0;z-index:8">
<defs>
<filter id="b1" x="-30%" y="-30%" width="160%" height="160%"><feGaussianBlur stdDeviation="1.200"/></filter>
<filter id="b2" x="-30%" y="-30%" width="160%" height="160%"><feGaussianBlur stdDeviation="2.500"/></filter>
<filter id="b4" x="-30%" y="-30%" width="160%" height="160%"><feGaussianBlur stdDeviation="4.500"/></filter>
<clipPath id="cS"><path id="pS" d="M787.700 372.500 Q780.500 373 778.200 380.500 Q776.800 391 779.400 406 Q781.500 421 784.500 436 Q785 441 785.500 447 Q779 440.500 769.500 441.400 Q758 442 754.500 452.800 Q754 458 754.300 463.500 Q750 462.500 745.400 463 Q735 464 731.500 475.600 Q730.500 482 731 489.500 Q727.500 488.600 724 489.300 Q714.500 492 709.500 504 Q705 516 703.800 528 Q703.400 542 704.700 554 Q706 566 708 577 L820.500 577 Q826 552 828 531 Q826.500 518 824.500 510.700 Q821.500 492 817.600 476 Q815 460 812.500 448 Q811 432 808.500 422.500 Q805 410 800.200 391.300 Q799 382 797 378 Q794 372.500 787.700 372.500 Z"/></clipPath>
<clipPath id="cM"><path id="pM" d="M769.500 441.400 Q758 442 754.500 452.800 Q752.500 466 757 484 Q761 500 768 513 Q775 520.500 784 518.500 Q793 515 794 503 Q792 480 787 456 Q782 441 769.500 441.400 Z"/></clipPath>
<clipPath id="cR"><path id="pR" d="M745.400 463 Q735 464 731.500 475.600 Q729.500 488 734 504 Q739 522 748 533 Q756 539.500 764 536.500 Q772 532 772.500 521 Q770 500 764 482 Q757 462.500 745.400 463 Z"/></clipPath>
<clipPath id="cK"><path id="pK" d="M724 489.300 Q714.500 491 709.500 504 Q707 514 710 522 Q718 536 730 543 Q738 546.500 744 543.500 Q749 540 748 530 Q745 512 739 499 Q733 488 724 489.300 Z"/></clipPath>
</defs>
<g transform="translate(-1.200 0)"><use href="#pS" fill="#d69a7c"/>
<g clip-path="url(#cS)">
 <!-- palm shadow (left of thenar crease) -->
 <path d="M703 525 L790 519 Q774 530 766 546 Q761 560 760 578 L700 578 Z" fill="#c88e6e" filter="url(#b2)"/>
 <path d="M742 542 Q765 537 789 519 Q775 531 768 546 Q764 560 763 578 L750 578 Q751 556 742 542 Z" fill="#9c6446" filter="url(#b2)" opacity=".9"/>
 <!-- thenar highlight -->
 <path d="M798 455 Q804 500 802 577 L816 577 Q818 510 810 455 Z" fill="#e2a88c" filter="url(#b4)"/>
 <!-- index: left shade -> right light -->
 <path d="M781.500 376 Q779.500 392 782.500 408 Q785 424 788.500 445 Q790 470 791 500" fill="none" stroke="#bf7c60" stroke-width="7" stroke-linecap="round" filter="url(#b2)"/>
 <path d="M792 377 Q794.500 392 798 408 Q802 428 806 450 Q810 475 813 500" fill="none" stroke="#eaae96" stroke-width="7.500" stroke-linecap="round" filter="url(#b2)"/>
 <!-- index left thin edge shadow -->
 <path d="M779.500 374 Q776 390 779 406 Q781.500 422 785 441" fill="none" stroke="#b06e52" stroke-width="1.600" filter="url(#b1)"/>
 <!-- right edge -->
 <path d="M797 376 Q801 392 808.500 422.500 Q813 450 817.600 476 Q824 505 827 528 Q827 552 821 577" fill="none" stroke="#d09478" stroke-width="2.500" filter="url(#b2)"/>
 <!-- left edge of hand shading -->
 <path d="M709 504 Q703.500 520 703.800 540 Q705 560 708 577" fill="none" stroke="#b87e60" stroke-width="4" filter="url(#b2)"/>
 <!-- knuckle creases on index -->
 <path d="M783 404 Q792 401.500 802 405" fill="none" stroke="#b87860" stroke-width="1" filter="url(#b1)" opacity=".7"/>
 <path d="M788 436 Q798 432 809 437" fill="none" stroke="#b87860" stroke-width="1" filter="url(#b1)" opacity=".6"/>
</g>
<!-- pinky -->
<use href="#pK" fill="#d39878"/>
<g clip-path="url(#cK)">
 <ellipse cx="724" cy="499" rx="9" ry="8" fill="#e6ac92" filter="url(#b2)"/>
 <path d="M712 503 Q708 514 713 524 Q722 537 733 543" fill="none" stroke="#c08466" stroke-width="7" filter="url(#b2)"/><path d="M710 503 Q706 514 711 524 Q720 537 731 543" fill="none" stroke="#ac6e50" stroke-width="3.500" filter="url(#b1)"/>
 <path d="M744 544 Q750 538 748 528" fill="none" stroke="#b07456" stroke-width="2.500" filter="url(#b1)"/>
 <ellipse cx="741" cy="536.500" rx="4.800" ry="6" fill="#e0aa9a" transform="rotate(-25 741 536.500)" filter="url(#b1)"/>
</g>
<!-- ring -->
<use href="#pR" fill="#d59a7b"/>
<g clip-path="url(#cR)">
 <ellipse cx="747" cy="473" rx="9" ry="9" fill="#e9b097" filter="url(#b2)"/>
 <path d="M734 474 Q731 490 737 506 Q742 523 751 534" fill="none" stroke="#bd8062" stroke-width="8" filter="url(#b2)"/><path d="M732 474 Q729 490 735 506 Q740 523 749 534" fill="none" stroke="#a6684a" stroke-width="4" filter="url(#b1)"/>
 <path d="M764 537 Q773 531 772 518" fill="none" stroke="#b07456" stroke-width="2.500" filter="url(#b1)"/>
 <ellipse cx="761" cy="527.500" rx="6" ry="7" fill="#deaa9a" transform="rotate(-20 761 527.500)" filter="url(#b1)"/>
</g>
<!-- middle -->
<use href="#pM" fill="#d89c7e"/>
<g clip-path="url(#cM)">
 <ellipse cx="772" cy="452" rx="10" ry="9" fill="#ecb49b" filter="url(#b2)"/>
 <path d="M757 452 Q754 468 759.500 485 Q764 502 771 514" fill="none" stroke="#bd8062" stroke-width="9" filter="url(#b2)"/><path d="M755 452 Q752 468 757.500 485 Q762 502 769 514" fill="none" stroke="#a26446" stroke-width="4" filter="url(#b1)"/>
 <path d="M786 519 Q795 513 794 500 Q792 480 787 456" fill="none" stroke="#ba7e62" stroke-width="2.500" filter="url(#b1)"/>
 <ellipse cx="780.500" cy="507.500" rx="7.500" ry="8.500" fill="#e4b0a0" transform="rotate(-12 780.500 507.500)" filter="url(#b1)"/>
</g>
<!-- deep creases -->
<g clip-path="url(#cS)" fill="none">
 <path d="M768 514 Q776 521.500 785 519 Q790 518 791 522" stroke="#74402a" stroke-width="1.600" filter="url(#b1)" opacity=".85"/>
 <path d="M748 534 Q756 540 765 537" stroke="#85503a" stroke-width="1.300" filter="url(#b1)" opacity=".75"/>
 <path d="M730 543.500 Q738 547.500 745 544" stroke="#85503a" stroke-width="1.300" filter="url(#b1)" opacity=".75"/>
 <path d="M790 520 Q775 530 767 547 Q762 562 761 578" stroke="#8c553c" stroke-width="1.300" filter="url(#b1)" opacity=".7"/>
 <path d="M704 535 Q718 536.500 731 534" stroke="#945c42" stroke-width="1.100" filter="url(#b1)" opacity=".7"/>
 <path d="M707 516.500 Q713 516.500 718 518" stroke="#a06648" stroke-width="1" filter="url(#b1)" opacity=".6"/>
</g>
</g></svg>
</body></html>
